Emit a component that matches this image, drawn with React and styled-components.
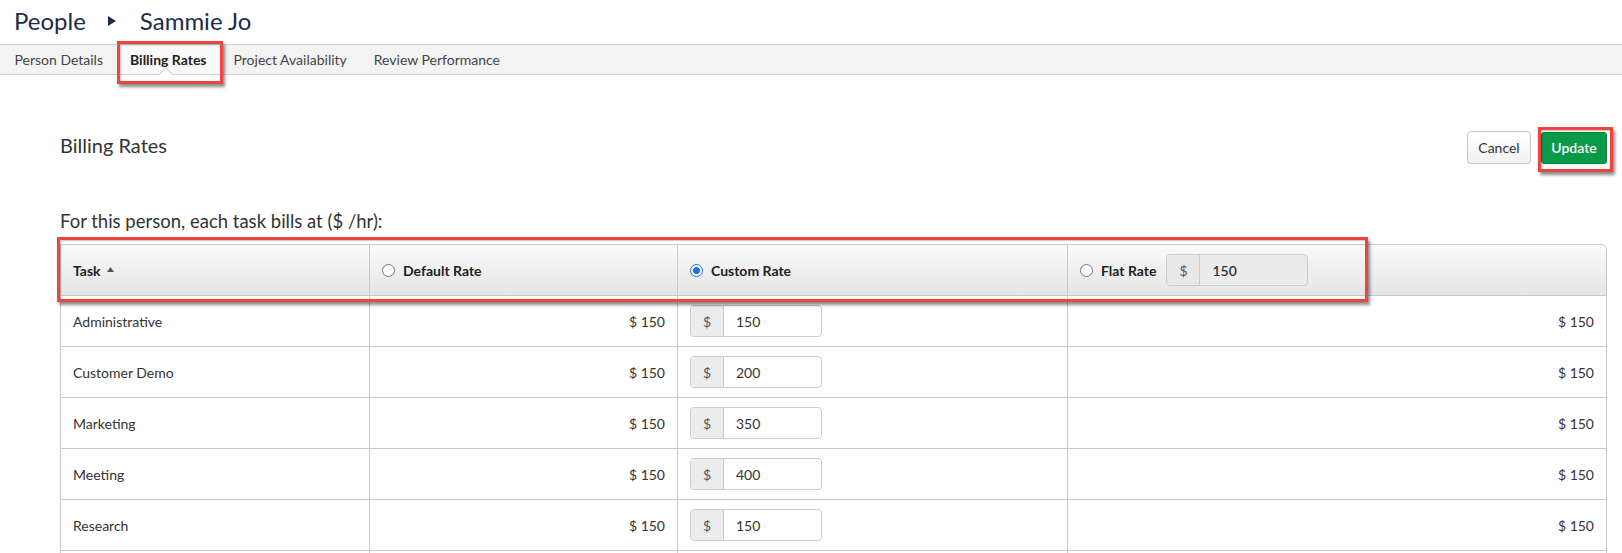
import React from "react";
import styled, { createGlobalStyle } from "styled-components";

const GlobalStyle = createGlobalStyle`
  html, body {
    margin: 0;
    padding: 0;
    background: #fff;
    font-family: Lato, "Open Sans", sans-serif;
    color: #333;
  }
  * { box-sizing: border-box; }
`;

const tasks = [
  { name: "Administrative", rate: 150, custom: 150 },
  { name: "Customer Demo", rate: 150, custom: 200 },
  { name: "Marketing", rate: 150, custom: 350 },
  { name: "Meeting", rate: 150, custom: 400 },
  { name: "Research", rate: 150, custom: 150 },
  { name: "Support", rate: 150, custom: 150 },
];

const tabs = ["Person Details", "Billing Rates", "Project Availability", "Review Performance"];

const App = () => {
  return (
    <>
      <GlobalStyle />
      <Page>
        <Breadcrumb>
          <span>People</span>
          <Separator width="8" height="10" viewBox="0 0 8 10">
            <polygon points="0,0 8,5 0,10" fill="#1c2b47" />
          </Separator>
          <span>Sammie Jo</span>
        </Breadcrumb>

        <TabBar>
          {tabs.map((t) => (
            <Tab key={t} $active={t === "Billing Rates"}>
              {t}
              {t === "Billing Rates" && <Highlight $top={-4} $left={1} $right={-3} $bottom={-10} />}
            </Tab>
          ))}
        </TabBar>

        <Content>
          <TitleRow>
            <Heading>Billing Rates</Heading>
            <Actions>
              <CancelButton>Cancel</CancelButton>
              <UpdateButton>
                Update
                <Highlight $top={-6} $left={-4} $right={-7} $bottom={-9} />
              </UpdateButton>
            </Actions>
          </TitleRow>

          <Intro>For this person, each task bills at ($ /hr):</Intro>

          <Table>
            <HeadRow>
              <HeadCell>
                Task
                <SortCaret width="7" height="5" viewBox="0 0 7 5">
                  <polygon points="0,5 3.5,0 7,5" fill="#555" />
                </SortCaret>
              </HeadCell>
              <HeadCell>
                <Radio />
                Default Rate
              </HeadCell>
              <HeadCell>
                <Radio $checked />
                Custom Rate
              </HeadCell>
              <HeadCell $last>
                <Radio />
                Flat Rate
                <MoneyInput $disabled $width={142}>
                  <Addon $disabled>$</Addon>
                  <InputValue $bold>150</InputValue>
                </MoneyInput>
              </HeadCell>
            </HeadRow>
            <Highlight $top={-7} $left={-3} $width={1311} $height={65} />

            {tasks.map((task) => (
              <Row key={task.name}>
                <Cell>{task.name}</Cell>
                <Cell $right>$ {task.rate}</Cell>
                <Cell>
                  <MoneyInput $width={132}>
                    <Addon>$</Addon>
                    <InputValue>{task.custom}</InputValue>
                  </MoneyInput>
                </Cell>
                <Cell $right $last>$ {task.rate}</Cell>
              </Row>
            ))}
          </Table>
        </Content>
      </Page>
    </>
  );
};

const Page = styled.div`
  width: 100%;
`;

// breadcrumb title
const Breadcrumb = styled.div`
  height: 44px;
  display: flex;
  align-items: center;
  padding-left: 14px;
  padding-bottom: 3px;
  font-size: 24px;
  color: #1c2b47;

  span:first-child {
    margin-right: 22px;
  }
`;

const Separator = styled.svg`
  margin-right: 24px;
`;

const TabBar = styled.div`
  display: flex;
  height: 31px;
  padding-left: 1px;
  background: #f3f3f4;
  border-top: 1px solid #cfcfcf;
  border-bottom: 1px solid #cfcfcf;
`;

const Tab = styled.div`
  position: relative;
  display: flex;
  align-items: center;
  padding: 0 13.5px;
  font-size: 14px;
  color: ${(p) => (p.$active ? "#222" : "#444")};
  font-weight: ${(p) => (p.$active ? 700 : 400)};
  background: ${(p) => (p.$active ? "#f9f9f9" : "transparent")};

  ${(p) =>
    p.$active &&
    `
    &::before {
      content: "";
      position: absolute;
      left: 50%;
      bottom: -5px;
      width: 9px;
      height: 9px;
      margin-left: -7px;
      background: #fff;
      border-top: 1px solid #cfcfcf;
      border-left: 1px solid #cfcfcf;
      transform: rotate(45deg);
    }
  `}
`;

// red annotation boxes drawn over the screenshot
const Highlight = styled.div`
  position: absolute;
  top: ${(p) => p.$top}px;
  left: ${(p) => p.$left}px;
  ${(p) => (p.$right !== undefined ? `right: ${p.$right}px;` : `width: ${p.$width}px;`)}
  ${(p) => (p.$bottom !== undefined ? `bottom: ${p.$bottom}px;` : `height: ${p.$height}px;`)}
  border: 3px solid #ee4540;
  box-shadow: 2px 3px 3px rgba(0, 0, 0, 0.45), inset 1px 1px 2px rgba(0, 0, 0, 0.25);
  pointer-events: none;
  z-index: 5;
`;

const Content = styled.div`
  padding: 0 15px 0 60px;
`;

const TitleRow = styled.div`
  display: flex;
  justify-content: space-between;
  align-items: center;
  margin-top: 56px;
`;

const Heading = styled.h2`
  margin: 0;
  margin-top: -5px;
  font-size: 20px;
  font-weight: 400;
  color: #333;
`;

const Actions = styled.div`
  display: flex;
  align-items: center;
  gap: 10px;
`;

const CancelButton = styled.button`
  height: 33px;
  width: 64px;
  padding: 0;
  font-family: Lato, sans-serif;
  font-size: 14px;
  color: #333;
  background: linear-gradient(#ffffff, #f1f1f1);
  border: 1px solid #c6c6c6;
  border-radius: 4px;
`;

const UpdateButton = styled.button`
  position: relative;
  height: 32px;
  width: 66px;
  padding: 0;
  font-family: Lato, sans-serif;
  font-size: 14px;
  font-weight: 600;
  color: #fff;
  background: #0a9a4a;
  border: 1px solid #08863f;
  border-radius: 3px;
`;

const Intro = styled.div`
  margin-top: 46px;
  margin-bottom: 12px;
  font-size: 18.5px;
  line-height: 22px;
  color: #333;
`;

const Table = styled.div`
  position: relative;
`;

const columns = "309px 308px 390px 1fr";

const HeadRow = styled.div`
  display: grid;
  grid-template-columns: ${columns};
  height: 52px;
  background: linear-gradient(#fafafa, #e5e5e5);
  border: 1px solid #c9c9c9;
  border-top-right-radius: 5px;
`;

const HeadCell = styled.div`
  display: flex;
  align-items: center;
  padding: 0 12px;
  font-size: 14px;
  font-weight: 700;
  color: #222;
  border-right: ${(p) => (p.$last ? "none" : "1px solid #c9c9c9")};
`;

const SortCaret = styled.svg`
  margin-left: 6px;
  margin-top: -1px;
`;

const Radio = styled.span`
  width: 13px;
  height: 13px;
  margin-right: 8px;
  border-radius: 50%;
  background: #fff;
  border: 1px solid ${(p) => (p.$checked ? "#1a6fe6" : "#767676")};
  position: relative;
  flex-shrink: 0;

  ${(p) =>
    p.$checked &&
    `
    &::after {
      content: "";
      position: absolute;
      left: 2px;
      top: 2px;
      width: 7px;
      height: 7px;
      border-radius: 50%;
      background: #1a6fe6;
    }
  `}
`;

const MoneyInput = styled.div`
  display: flex;
  width: ${(p) => p.$width}px;
  height: 32px;
  margin-left: ${(p) => (p.$disabled ? "10px" : "0")};
  border: 1px solid #cbcbcb;
  border-radius: 4px;
  background: ${(p) => (p.$disabled ? "#ebebeb" : "#fff")};
  overflow: hidden;
`;

const Addon = styled.div`
  width: 33px;
  display: flex;
  align-items: center;
  justify-content: center;
  font-size: 14px;
  font-weight: 400;
  color: #555;
  background: ${(p) => (p.$disabled ? "#e8e8e8" : "#ececec")};
  border-right: 1px solid #cbcbcb;
`;

const InputValue = styled.div`
  display: flex;
  align-items: center;
  padding-left: 12px;
  font-size: 14px;
  font-weight: ${(p) => (p.$bold ? 600 : 400)};
  color: #333;
`;

const Row = styled.div`
  display: grid;
  grid-template-columns: ${columns};
  height: 51px;
  border-left: 1px solid #c9c9c9;
  border-right: 1px solid #c9c9c9;
  border-bottom: 1px solid #c9c9c9;
`;

const Cell = styled.div`
  display: flex;
  align-items: center;
  justify-content: ${(p) => (p.$right ? "flex-end" : "flex-start")};
  padding: 0 12px;
  font-size: 14px;
  color: #333;
  border-right: ${(p) => (p.$last ? "none" : "1px solid #c9c9c9")};
`;

export default App;
